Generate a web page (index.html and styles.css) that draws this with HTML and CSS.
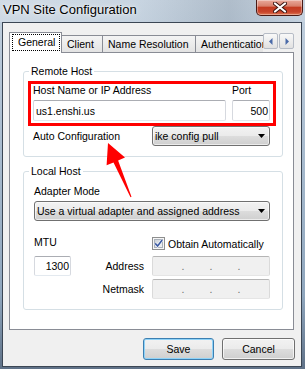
FILE: index.html
```html
<!DOCTYPE html>
<html>
<head>
<meta charset="utf-8">
<title>VPN Site Configuration</title>
<link rel="stylesheet" href="styles.css">
</head>
<body>
<div class="window">
  <div class="titlebar">
    <span class="title">VPN Site Configuration</span>
    <div class="close">
      <svg width="14" height="11" viewBox="0 0 14 11">
        <path d="M2 1.5 L12 9.5 M12 1.5 L2 9.5" stroke="#3a1410" stroke-width="4" stroke-linecap="round" fill="none"/>
        <path d="M2 1.5 L12 9.5 M12 1.5 L2 9.5" stroke="#ffffff" stroke-width="2.2" stroke-linecap="round" fill="none"/>
      </svg>
    </div>
  </div>
  <div class="client">
    <div class="tabstrip">
      <div class="tabs">
        <div class="tab selected"><span class="focus">General</span></div>
        <div class="tab t-client">Client</div>
        <div class="tab t-name">Name Resolution</div>
        <div class="tab t-auth">Authentication</div>
      </div>
      <div class="tab-arrows">
        <div class="arrow-btn"><svg width="4" height="7" viewBox="0 0 4 7"><polygon points="3.5,0 0,3.5 3.5,7" fill="#4a6aa8"/></svg></div>
        <div class="arrow-btn"><svg width="4" height="7" viewBox="0 0 4 7"><polygon points="0.5,0 4,3.5 0.5,7" fill="#4a6aa8"/></svg></div>
      </div>
    </div>
    <div class="panel">
      <fieldset class="group remote">
        <legend>Remote Host</legend>
        <div class="host-grid">
          <div class="label">Host Name or IP Address</div>
          <div class="label">Port</div>
          <div class="input">us1.enshi.us</div>
          <div class="input num">500</div>
        </div>
        <div class="auto-row">
          <div class="label">Auto Configuration</div>
          <div class="combo w-auto"><span>ike config pull</span><svg class="caret" width="7" height="4" viewBox="0 0 7 4"><polygon points="0,0 7,0 3.5,4" fill="#000"/></svg></div>
        </div>
      </fieldset>
      <fieldset class="group local">
        <legend>Local Host</legend>
        <div class="label">Adapter Mode</div>
        <div class="combo w-adapter"><span>Use a virtual adapter and assigned address</span><svg class="caret" width="7" height="4" viewBox="0 0 7 4"><polygon points="0,0 7,0 3.5,4" fill="#000"/></svg></div>
        <div class="mtu-grid">
          <div class="label mtu-label">MTU</div>
          <div class="check-row">
            <span class="checkbox">
              <svg width="13" height="13" viewBox="0 0 13 13">
                <defs>
                  <linearGradient id="cb" x1="0" y1="0" x2="1" y2="1">
                    <stop offset="0" stop-color="#c9cfd6"/>
                    <stop offset="1" stop-color="#f4f5f6"/>
                  </linearGradient>
                </defs>
                <rect x="0.5" y="0.5" width="12" height="12" fill="#f6f6f6" stroke="#8e8f8f"/>
                <rect x="2.5" y="2.5" width="8" height="8" fill="url(#cb)" stroke="#aab1ba"/>
                <path d="M3.2 6.4 L5.6 9 L10.2 3" fill="none" stroke="#ffffff" stroke-width="2.6"/>
                <path d="M3.2 6.4 L5.6 9 L10.2 3" fill="none" stroke="#3b5aa3" stroke-width="1.6"/>
              </svg>
            </span>
            <span>Obtain Automatically</span>
          </div>
          <div class="input num">1300</div>
          <div class="label right">Address</div>
          <div class="ipfield"><span class="seg"></span><span class="dot">.</span><span class="seg"></span><span class="dot">.</span><span class="seg"></span><span class="dot">.</span><span class="seg"></span></div>
          <div class="label right netmask">Netmask</div>
          <div class="ipfield"><span class="seg"></span><span class="dot">.</span><span class="seg"></span><span class="dot">.</span><span class="seg"></span><span class="dot">.</span><span class="seg"></span></div>
        </div>
      </fieldset>
    </div>
    <div class="buttons">
      <button class="btn default">Save</button>
      <button class="btn">Cancel</button>
    </div>
  </div>
  <div class="annot-box"></div>
  <svg class="annot-arrow" width="35" height="60" viewBox="0 0 35 60">
    <polygon points="8,3 25,17.5 18.1,20.4 31.5,56.8 30.5,57.2 13.5,22.4 6.6,25.3" fill="#ff0000"/>
  </svg>
</div>
</body>
</html>
```
FILE: styles.css
```css
* { box-sizing: border-box; }
html, body { margin: 0; padding: 0; }
body {
  width: 305px;
  height: 369px;
  overflow: hidden;
  font-family: "Liberation Sans", Arial, sans-serif;
  font-size: 10.5px;
  color: #000;
}
.window {
  position: relative;
  width: 305px;
  height: 369px;
  display: flex;
  flex-direction: column;
  background: linear-gradient(180deg, #c2d0de 0%, #a9bccf 40%, #8fa6bd 80%, #5f7187 100%);
}
.titlebar {
  height: 22px;
  flex: none;
  display: flex;
  justify-content: space-between;
  align-items: flex-start;
  padding: 0 2px 0 3px;
  background: linear-gradient(90deg, rgba(255,255,255,0.25) 0%, rgba(255,255,255,0.1) 45%, rgba(40,50,60,0.12) 75%, rgba(255,255,255,0.1) 100%);
}
.title {
  font-size: 13px;
  line-height: 19px;
  color: #000;
  text-shadow: 0 0 6px rgba(255,255,255,0.9), 0 0 2px rgba(255,255,255,0.8);
  white-space: nowrap;
}
.close {
  width: 47px;
  height: 16px;
  border: 1px solid #4a1a14;
  border-top: none;
  border-radius: 0 0 5px 5px;
  background: linear-gradient(180deg, #e9a99b 0%, #d8806c 40%, #c43b21 50%, #c8452c 80%, #e07a55 100%);
  box-shadow: inset 0 0 0 1px rgba(255,255,255,0.35);
  display: flex;
  align-items: center;
  justify-content: center;
}
.client {
  flex: none;
  margin: 0 3px 0 2px;
  height: 345px;
  border: 1px solid #3b4654;
  background: #f0f0f0;
  padding: 9px 7px 6px 6px;
  display: flex;
  flex-direction: column;
}
.tabstrip {
  display: flex;
  height: 20px;
  flex: none;
}
.tabs {
  width: 254px;
  height: 21px;
  flex: none;
  display: flex;
  align-items: flex-start;
  overflow: hidden;
  position: relative;
  z-index: 1;
}
.tab {
  flex: none;
  height: 17px;
  margin-top: 3px;
  margin-left: -1px;
  border: 1px solid #898c95;
  border-bottom: none;
  background: linear-gradient(180deg, #f4f4f4 0%, #ececec 50%, #e3e3e3 100%);
  padding-left: 5px;
  line-height: 16px;
  white-space: nowrap;
}
.tab.selected {
  height: 21px;
  width: 53px;
  margin-top: 0;
  margin-left: 0;
  background: #ffffff;
  padding: 1px 1px 2px 2px;
  position: relative;
  z-index: 1;
}
.focus {
  display: block;
  width: 48px;
  height: 17px;
  border: 1px dotted #000;
  padding-left: 5px;
  line-height: 15px;
}
.t-client { width: 42px; }
.t-name { width: 94px; }
.t-auth { width: 90px; }
.tab-arrows {
  width: 31px;
  flex: none;
  display: flex;
  gap: 1px;
  padding-top: 1px;
}
.arrow-btn {
  width: 15px;
  height: 16px;
  border: 1px solid #b6bcc6;
  border-radius: 2px;
  background: linear-gradient(180deg, #f8f8f8 0%, #ededed 50%, #e1e1e1 100%);
  display: flex;
  align-items: center;
  justify-content: center;
}
.panel {
  height: 278px;
  flex: none;
  border: 1px solid #898c95;
  background: #ffffff;
  padding: 12px 10px 0 13px;
}
.group {
  margin: 0;
  min-width: 0;
  border: 1px solid #d5dfe5;
  border-radius: 3px;
}
.group legend {
  padding: 0 2px;
  line-height: 13px;
}
.remote { padding: 6px 12px 10px 9px; }
.remote legend { margin-left: -4px; }
.local { margin-top: 8px; padding: 7px 12px 10px 10px; }
.local legend { margin-left: -5px; }
.label {
  line-height: 13px;
  white-space: nowrap;
}
.host-grid {
  display: grid;
  grid-template-columns: 193px 38px;
  grid-template-rows: 13px 21px;
  column-gap: 6px;
  row-gap: 3px;
}
.input {
  border: 1px solid #d6d9df;
  border-top-color: #abadb3;
  border-bottom-color: #e3e9ef;
  border-radius: 2px;
  background: #ffffff;
  padding: 0 2px;
  display: flex;
  align-items: center;
  white-space: nowrap;
}
.input.num { justify-content: flex-end; padding-right: 1px; }
.auto-row {
  margin-top: 5px;
  display: flex;
  justify-content: space-between;
  align-items: center;
}
.combo {
  height: 20px;
  border: 1px solid #707070;
  border-radius: 3px;
  background: linear-gradient(180deg, #f2f2f2 0%, #ebebeb 49%, #dddddd 50%, #cfcfcf 100%);
  box-shadow: inset 0 0 0 1px rgba(255,255,255,0.6);
  display: flex;
  align-items: center;
  justify-content: space-between;
  padding: 0 4px 0 2px;
  white-space: nowrap;
}
.caret { flex: none; }
.w-auto { width: 118px; }
.w-adapter { width: 236px; margin-top: 3px; }
.mtu-grid {
  margin-top: 15px;
  display: grid;
  grid-template-columns: 37px 81px 118px;
  grid-template-rows: 17px 20px 20px;
  row-gap: 3px;
}
.mtu-label { grid-column: 1 / 3; }
.check-row {
  display: flex;
  align-items: center;
  gap: 3px;
  height: 13px;
  margin-top: 1px;
  white-space: nowrap;
}
.checkbox { width: 13px; height: 13px; display: block; }
.checkbox svg { display: block; }
.right {
  text-align: right;
  padding-right: 8px;
  line-height: 20px;
}
.netmask { grid-column: 2; }
.ipfield {
  border: 1px solid #dadada;
  border-top-color: #b5b5b5;
  border-bottom-color: #e5e5e5;
  border-radius: 2px;
  background: #f0f0f0;
  display: flex;
  justify-content: center;
  align-items: center;
  color: #6d6d6d;
}
.seg { width: 26px; }
.dot {
  width: 2px;
  display: flex;
  justify-content: center;
  line-height: 18px;
  overflow: visible;
}
.buttons {
  margin-top: 8px;
  margin-right: -1px;
  display: flex;
  justify-content: flex-end;
  gap: 8px;
}
.btn {
  margin: 0;
  height: 22px;
  width: 73px;
  padding: 0;
  font-family: inherit;
  font-size: 10.5px;
  color: #000;
  border: 1px solid #707070;
  border-radius: 3px;
  background: linear-gradient(180deg, #f2f2f2 0%, #ebebeb 49%, #dddddd 50%, #cfcfcf 100%);
  box-shadow: inset 0 0 0 1px rgba(255,255,255,0.7);
}
.btn.default {
  width: 71px;
  border-color: #3c7fb1;
  box-shadow: inset 0 0 0 1px #8fd3f8;
}
.annot-box {
  position: absolute;
  left: 28px;
  top: 81px;
  width: 248px;
  height: 45px;
  border: 3px solid #ff0000;
}
.annot-arrow {
  position: absolute;
  left: 100px;
  top: 140px;
}
```
